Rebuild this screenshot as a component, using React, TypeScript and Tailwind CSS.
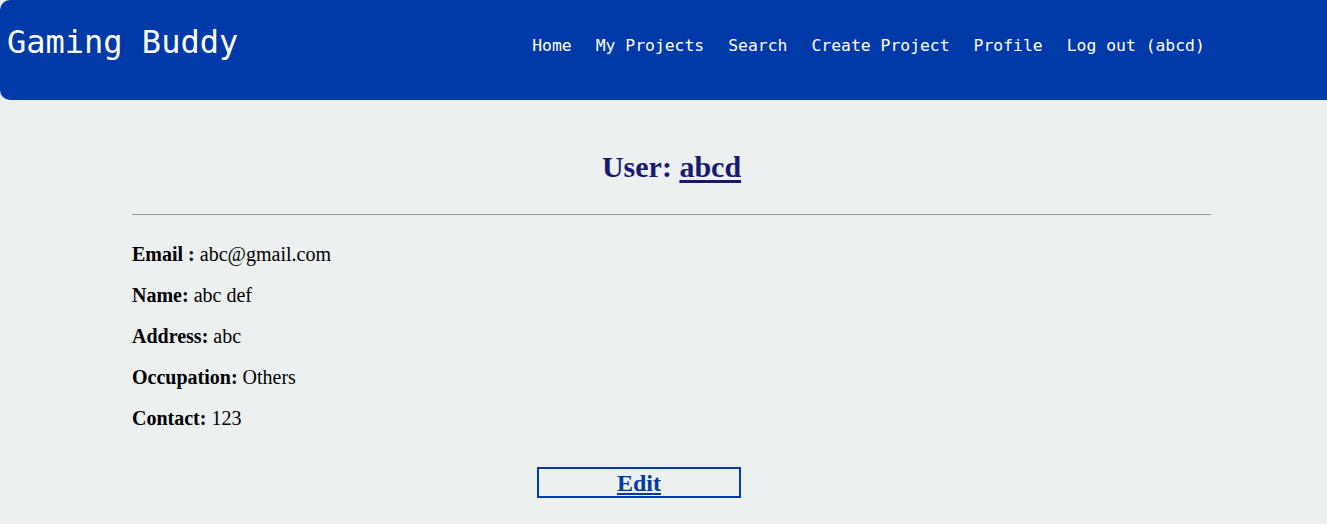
import React from "react";

const navLinks = ["Home", "My Projects", "Search", "Create Project", "Profile", "Log out (abcd)"];

const fields: [string, string][] = [
  ["Email :", "abc@gmail.com"],
  ["Name:", "abc def"],
  ["Address:", "abc"],
  ["Occupation:", "Others"],
  ["Contact:", "123"],
];

export default function App() {
  return (
    <div className="min-h-[524px] bg-[#ecf0f1] font-['Liberation_Serif',serif] text-black">
      {/* Top bar */}
      <header className="flex h-[100px] items-start rounded-l-[10px] bg-[#0039a8] font-['DejaVu_Sans_Mono',monospace] text-white">
        <h1 className="ml-[7px] mt-[23px] text-[32px] leading-[38px]">Gaming Buddy</h1>
        <nav className="ml-[294px] mt-[36px] flex gap-[24px] text-[16.4px] leading-[20px]">
          {navLinks.map((l) => (
            <a key={l} href="#" className="whitespace-pre">
              {l}
            </a>
          ))}
        </nav>
      </header>

      {/* Profile */}
      <main className="ml-[132px] w-[1079px] pt-[50px]">
        <h2 className="text-center text-[30px] font-bold leading-[34px] text-[#191970]">
          User: <a href="#" className="underline decoration-[3px] underline-offset-[3px]">abcd</a>
        </h2>
        <hr className="mt-[30px] border-t-[1.5px] border-[#9a9a9a]" />
        <div className="mt-[28px] flex flex-col gap-[18px] text-[20px] leading-[23px]">
          {fields.map(([k, v]) => (
            <p key={k}>
              <b>{k}</b> {v}
            </p>
          ))}
        </div>
        <div className="ml-[405px] mt-[37px] flex h-[31px] w-[204px] items-center justify-center border-2 border-[#0039a8]">
          <a href="#" className="text-[24px] font-bold leading-[26px] text-[#0039a8] underline decoration-[2px] underline-offset-[2px]">
            Edit
          </a>
        </div>
      </main>
    </div>
  );
}
